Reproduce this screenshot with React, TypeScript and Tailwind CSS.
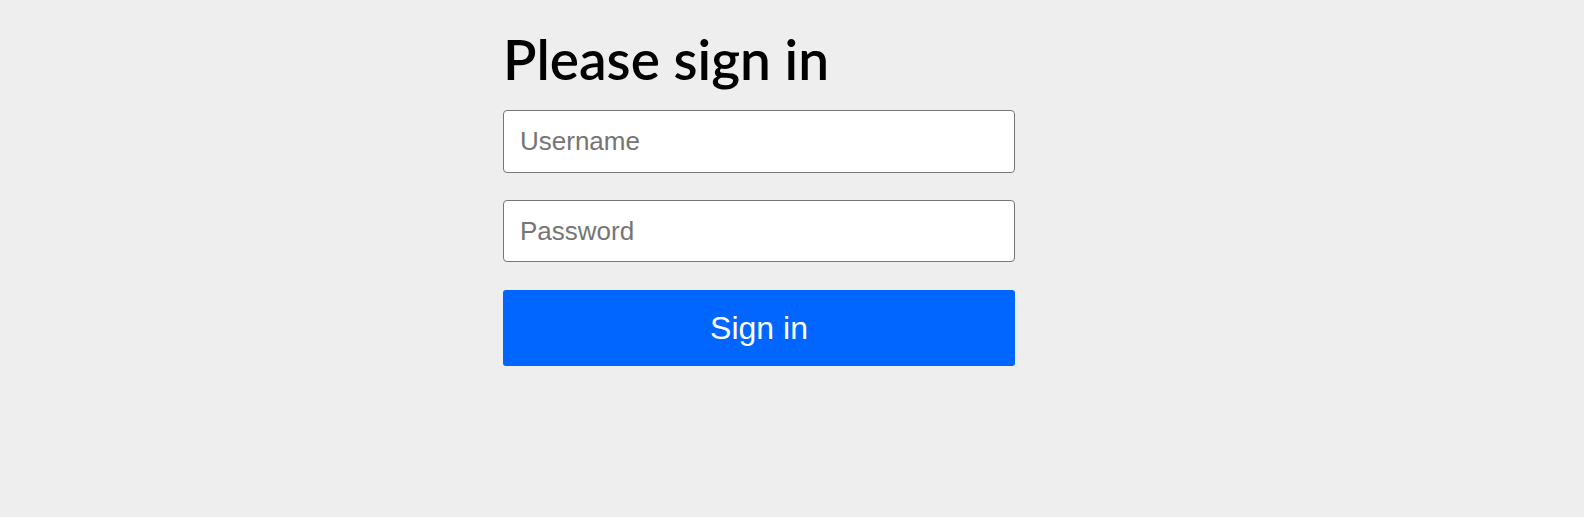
export default function App() {
  return (
    <div className="min-h-[517px] w-full bg-[#eeeeee] pl-[503px] pt-[31px]">
      <form className="flex w-[512px] flex-col" onSubmit={(e) => e.preventDefault()}>
        <h1 className="mb-[23px] text-[55px] font-semibold leading-[56px] text-black [font-family:Lato,'Noto_Sans',sans-serif]">
          Please sign in
        </h1>
        <input
          type="text"
          placeholder="Username"
          className="mb-[27px] h-[63px] w-full rounded-[4px] border border-[#767676] bg-white px-[16px] text-[26px] text-black outline-none placeholder:text-[#757575] [font-family:'Liberation_Sans',Arial,sans-serif]"
        />
        <input
          type="password"
          placeholder="Password"
          className="mb-[28px] h-[62px] w-full rounded-[4px] border border-[#767676] bg-white px-[16px] text-[26px] text-black outline-none placeholder:text-[#757575] [font-family:'Liberation_Sans',Arial,sans-serif]"
        />
        <button
          type="submit"
          className="h-[76px] w-full rounded-[3px] bg-[#0066ff] text-[32px] text-white [font-family:'Liberation_Sans',Arial,sans-serif]"
        >
          Sign in
        </button>
      </form>
    </div>
  );
}
